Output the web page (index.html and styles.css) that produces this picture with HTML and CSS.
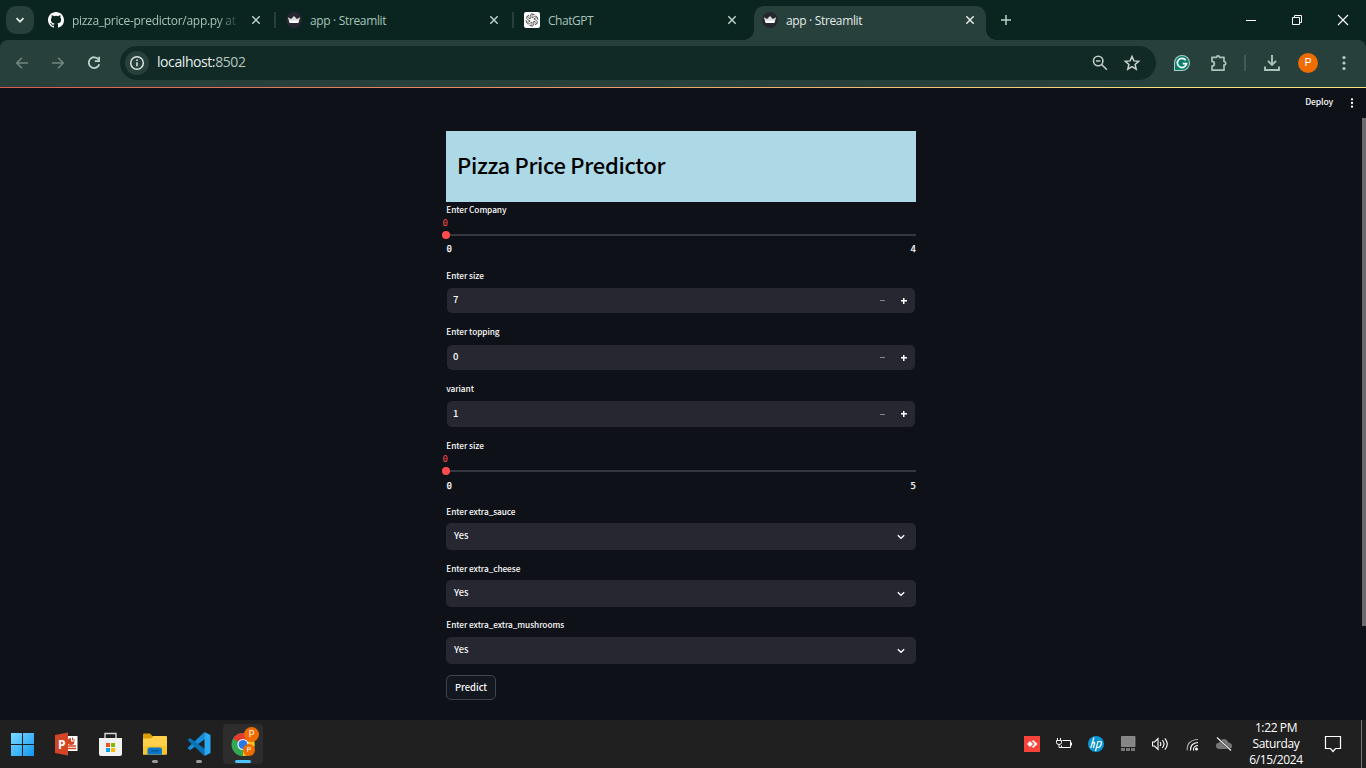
FILE: index.html
```html
<!DOCTYPE html>
<html lang="en">
<head>
<meta charset="utf-8">
<title>app · Streamlit</title>
<link rel="stylesheet" href="styles.css">
</head>
<body>
<svg class="defs" width="0" height="0">
  <defs>
    <symbol id="close" viewBox="0 0 16 16"><path d="M4.3 4.3l7.4 7.4M11.7 4.3l-7.4 7.4" stroke="currentColor" stroke-width="1.5" fill="none"/></symbol>
    <symbol id="crown" viewBox="0 0 16 16"><circle cx="8" cy="8" r="8" fill="#262730"/><path d="M1.8 5.2l3.3 1.9L8 4l2.9 3.1 3.3-1.9-1.6 5.1q-.2.7-1 .7H4.4q-.8 0-1-.7z" fill="#dcdcdc"/><path d="M3 8.8h10l-.5 1.5q-.2.7-1 .7h-7q-.8 0-1-.7z" fill="#fff"/></symbol>
    <symbol id="chev" viewBox="0 0 12 12"><path d="M2.800 4.200L6 7.300l3.200-3.100" stroke="#fafafa" stroke-width="1.400" fill="none"/></symbol>
  </defs>
</svg>

<header class="tabstrip">
  <button class="tab-search"><svg width="12" height="12" viewBox="0 0 12 12"><path d="M2.5 4.2L6 7.7l3.5-3.5" stroke="#dbe8e2" stroke-width="1.8" fill="none"/></svg></button>
  <div class="tab">
    <svg class="favicon" viewBox="0 0 16 16"><path fill="#fff" d="M8 0C3.58 0 0 3.58 0 8c0 3.54 2.29 6.53 5.47 7.59.4.07.55-.17.55-.38v-1.49c-2.01.37-2.53-.49-2.69-.94-.09-.23-.48-.94-.82-1.13-.28-.15-.68-.52-.01-.53.63-.01 1.08.58 1.23.82.72 1.21 1.87.87 2.33.66.07-.52.28-.87.51-1.07-1.78-.2-3.64-.89-3.64-3.95 0-.87.31-1.59.82-2.15-.08-.2-.36-1.02.08-2.12 0 0 .67-.21 2.2.82a7.5 7.5 0 014 0c1.53-1.04 2.2-.82 2.2-.82.44 1.1.16 1.92.08 2.12.51.56.82 1.27.82 2.15 0 3.07-1.87 3.75-3.65 3.95.29.25.54.73.54 1.48v2.2c0 .21.15.46.55.38A8 8 0 0016 8c0-4.42-3.58-8-8-8z"/></svg>
    <span class="tab-title fade">pizza_price-predictor/app.py at</span>
    <svg class="tab-close"><use href="#close"/></svg><i class="tab-sep"></i>
  </div>
  <div class="tab">
    <svg class="favicon"><use href="#crown"/></svg>
    <span class="tab-title">app · Streamlit</span>
    <svg class="tab-close"><use href="#close"/></svg><i class="tab-sep"></i>
  </div>
  <div class="tab">
    <svg class="favicon" viewBox="0 0 16 16"><rect width="16" height="16" rx="2" fill="#fff"/><g fill="none" stroke="#333" stroke-width=".7"><path id="petal" d="M8 5.900L10.600 4.400C12.600 3.300 14.200 5.400 13.400 7.100M8 5.900V3.800C8 2.300 9.800 1.900 10.700 2.900"/><use href="#petal" transform="rotate(60 8 8)"/><use href="#petal" transform="rotate(120 8 8)"/><use href="#petal" transform="rotate(180 8 8)"/><use href="#petal" transform="rotate(240 8 8)"/><use href="#petal" transform="rotate(300 8 8)"/></g></svg>
    <span class="tab-title chat">ChatGPT</span>
    <svg class="tab-close"><use href="#close"/></svg>
  </div>
  <div class="tab active">
    <svg class="favicon"><use href="#crown"/></svg>
    <span class="tab-title">app · Streamlit</span>
    <svg class="tab-close"><use href="#close"/></svg>
  </div>
  <svg class="new-tab" viewBox="0 0 16 16"><path d="M8 3v10M3 8h10" stroke="#b9d3c9" stroke-width="1.5"/></svg>
  <div class="window-buttons">
    <svg viewBox="0 0 46 40"><path d="M18 20.5h10" stroke="#fff"/></svg>
    <svg viewBox="0 0 46 40"><path d="M18.5 17.500h7v7h-7zM20.500 17.500v-2h7v7h-2" stroke="#fff" fill="none"/></svg>
    <svg viewBox="0 0 46 40"><path d="M18 15l10 10M28 15l-10 10" stroke="#fff" stroke-width="1.1"/></svg>
  </div>
</header>

<nav class="toolbar">
  <svg class="nav-icon" viewBox="0 0 16 16"><path d="M14 8H3M8 2.7L2.700 8 8 13.300" stroke="#70857f" stroke-width="1.6" fill="none"/></svg>
  <svg class="nav-icon" viewBox="0 0 16 16"><path d="M2 8h11M8 2.700L13.300 8 8 13.300" stroke="#70857f" stroke-width="1.600" fill="none"/></svg>
  <svg class="nav-icon" viewBox="0 0 16 16"><path d="M12.600 4.600A5.400 5.400 0 1013.300 9.300" stroke="#bdd5cc" stroke-width="1.800" fill="none"/><path d="M14 1.800V7H8.800V5.300h3.500V1.800z" fill="#bdd5cc"/></svg>
  <div class="omnibox">
    <span class="info"><svg width="16" height="16" viewBox="0 0 16 16"><circle cx="8" cy="8" r="6.300" stroke="#d9e3df" stroke-width="1.500" fill="none"/><path d="M8 7.200v4M8 4.500v1.600" stroke="#d9e3df" stroke-width="1.600"/></svg></span>
    <span class="url">localhost:<b>8502</b></span>
    <svg class="box-icon" viewBox="0 0 18 18"><circle cx="7.200" cy="7" r="4.700" stroke="#c2ccc8" stroke-width="1.600" fill="none"/><path d="M10.600 10.500l5.300 5.200M5 7h4.400" stroke="#c2ccc8" stroke-width="1.600"/></svg>
    <svg class="box-icon" viewBox="0 0 18 18"><path d="M9 2.500l1.900 4.400 4.800.4-3.600 3.200 1.100 4.700L9 12.700l-4.200 2.500 1.100-4.700-3.600-3.200 4.800-.4z" stroke="#c9d4d0" stroke-width="1.500" fill="none"/></svg>
  </div>
  <div class="extensions">
    <svg class="grammarly" viewBox="0 0 16 16"><path d="M0 16V8a8 8 0 118 8z" fill="#a9cfc3"/><path d="M1 15V8a7 7 0 117 7z" fill="#087d6b"/><path d="M11.700 5.200A4.600 4.600 0 1012.500 8.700H8.700" stroke="#fff" stroke-width="1.700" fill="none"/></svg>
    <svg class="puzzle" viewBox="0 0 18 18"><path d="M2 3.300h4.500a1.500 1.500 0 013 0H14v4.200a1.700 1.700 0 010 3.400v5.300H2v-4.100a2.300 2.300 0 000-4.700z" stroke="#a9c5bb" stroke-width="1.700" fill="none" stroke-linejoin="round"/></svg>
    <i class="bar-sep"></i>
    <svg class="download" viewBox="0 0 18 18"><path d="M9 1v9.500M4.900 6.900L9 11l4.100-4.100M2 12.500V16h14v-3.500" stroke="#a9c5bb" stroke-width="1.900" fill="none"/></svg>
    <span class="avatar">P</span>
    <svg class="kebab" viewBox="0 0 4 16"><g fill="#b5cdc4"><circle cx="2" cy="2.500" r="1.600"/><circle cx="2" cy="8" r="1.600"/><circle cx="2" cy="13.500" r="1.600"/></g></svg>
  </div>
</nav>

<main class="app">
  <div class="app-header"><span class="deploy">Deploy</span><svg width="4" height="10" viewBox="0 0 4 10"><g fill="#fafafa"><circle cx="2" cy="1.300" r="1.150"/><circle cx="2" cy="5" r="1.150"/><circle cx="2" cy="8.700" r="1.150"/></g></svg></div>
  <div class="scrollbar"></div>
  <form class="form">
    <h1 class="banner">Pizza Price Predictor</h1>
    <div class="field slider"><label>Enter Company</label><span class="value">0</span><div class="track"><i class="thumb"></i></div><div class="ticks"><span>0</span><span>4</span></div></div>
    <div class="field short"><label>Enter size</label><div class="number"><span>7</span><i class="minus"></i><i class="plus"></i></div></div>
    <div class="field"><label>Enter topping</label><div class="number"><span>0</span><i class="minus"></i><i class="plus"></i></div></div>
    <div class="field"><label>variant</label><div class="number tall"><span>1</span><i class="minus"></i><i class="plus"></i></div></div>
    <div class="field slider second"><label>Enter size</label><span class="value">0</span><div class="track"><i class="thumb"></i></div><div class="ticks"><span>0</span><span>5</span></div></div>
    <div class="field"><label>Enter extra_sauce</label><div class="select"><span>Yes</span><svg><use href="#chev"/></svg></div></div>
    <div class="field short tight"><label>Enter extra_cheese</label><div class="select"><span>Yes</span><svg><use href="#chev"/></svg></div></div>
    <div class="field tight"><label>Enter extra_extra_mushrooms</label><div class="select"><span>Yes</span><svg><use href="#chev"/></svg></div></div>
    <button type="button" class="predict">Predict</button>
  </form>
</main>

<footer class="taskbar">
  <div class="task"><svg viewBox="0 0 24 24"><defs><linearGradient id="win" x1="0" y1="0" x2="1" y2="1" gradientUnits="objectBoundingBox"><stop offset="0" stop-color="#7bdcff"/><stop offset="1" stop-color="#1296f3"/></linearGradient></defs><path d="M1 1H12v11H1zM13 1h11v11h-11zM1 13h11v11H1zM13 13h11v11h-11z" fill="url(#win)"/></svg></div>
  <div class="task"><svg viewBox="0 0 24 24"><path d="M12 4h11.500v15H12z" fill="#fff"/><path d="M14 16.500h8M14 14h8" stroke="#d24625" stroke-width="1.300"/><path d="M17 6a3.500 3.500 0 103.500 3.500H17z" fill="#d24625"/><path d="M18.500 5.500V8H21" stroke="#d24625" fill="none"/><path d="M1 3L14 .5v23L1 21z" fill="#d24625"/><text x="4" y="16.500" class="ppt">P</text></svg></div>
  <div class="task"><svg viewBox="0 0 24 24"><path d="M7 7V1.500h11V7" fill="none" stroke="#d8d8d8" stroke-width="1.400"/><path d="M1 6h23v16q0 2-2 2H3q-2 0-2-2z" fill="#f2f2f2"/><path d="M8 11h4v4H8z" fill="#f25022"/><path d="M13 11h4v4h-4z" fill="#7fba00"/><path d="M8 16h4v4H8z" fill="#00a4ef"/><path d="M13 16h4v4h-4z" fill="#ffb900"/></svg></div>
  <div class="task running"><svg viewBox="0 0 24 24"><path d="M1 2.500q0-1 1-1h6l2.500 2.700V8H1z" fill="#dc9d05"/><path d="M1 6.500h8l2-2.500h13q1 0 1 1v16.500q0 1-1 1H1z" fill="#ffd04a"/><path d="M1 14h24v7.500q0 1-1 1H1z" fill="#fbc52f"/><path d="M5.500 22.500v-5q0-2 2-2h10.500q2 0 2 2v5z" fill="#0877c9"/><path d="M9 18.800h7.500" stroke="#075593" stroke-width="1.300"/></svg></div>
  <div class="task running"><svg viewBox="0 0 24 24"><g transform="translate(1)"><path d="M17.500 0L18 7 3 18.200.5 16z" fill="#168dda"/><path d="M.5 8L3 6l15 11-.5 7z" fill="#0872b8"/><path d="M17.500 0L23.500 3v18l-6 3z" fill="#2aa9f2"/></g></svg></div>
  <div class="task current"><svg viewBox="0 0 24 24"><g transform="translate(1)"><circle cx="12" cy="12.500" r="11.500" fill="#31a852"/><path d="M12 12.500L2.100 6.700A11.500 11.500 0 0122 6.700z" fill="#e33b2e"/><path d="M12 12.500L22 6.700A11.500 11.500 0 0112 24z" fill="#fbc116"/><circle cx="12" cy="12.500" r="5.600" fill="#fff"/><circle cx="12" cy="12.500" r="4.500" fill="#2879e6"/></g></svg><b class="badge">P</b><b class="badge small">P</b></div>

  <div class="tray">
    <svg class="t1" viewBox="0 0 16 16"><path d="M0 0h16v16H0z" fill="#f9433a"/><path d="M3 8l3-3 3 3-3 3zM8 5.200l1.200-1.200L13.500 8l-4.300 4L8 10.800 10.800 8z" fill="#fff"/></svg>
    <svg class="t2" viewBox="0 0 16 16"><path d="M6.500 4.500h8v7H5.500V9.500M15.500 6.500v3M.5 4.500h5v2q0 2-2.500 2T.5 6.500zM1.500 2v2.500M4.500 2v2.500M3 8.500v3h2.500" fill="none" stroke="#fff"/></svg>
    <svg class="t3" viewBox="0 0 16 16"><circle cx="8" cy="8" r="8" fill="#0996d5"/><path d="M6 1.500L2.700 12M4 8q2.300-2.800 2.700-.8L5.300 12M12 5.500h-2L7.500 15M12 5.500q2 0 1.300 2.500T10.500 11.500H9" stroke="#fff" stroke-width="1.200" fill="none"/></svg>
    <svg class="t4" viewBox="0 0 16 16"><path d="M1.500.5h13.500v10H1.500z" fill="#858585" stroke="#a0a0a0" stroke-width=".7"/><path d="M1 12h4v3H1zM6 12h4v3H6zM11 12h4v3h-4z" fill="#777"/></svg>
    <svg class="t5" viewBox="0 0 18 16"><path d="M.5 6h2L6 2.500v11L2.500 10h-2zM8 6q1.600 2 0 4M10.300 4q3.400 4 0 8M12.800 2.300q5 5.700 0 11.400" fill="none" stroke="#fff" stroke-width="1.100"/></svg>
    <svg class="t6" viewBox="0 0 16 16"><circle cx="12.500" cy="13" r="1.500" fill="#fff"/><path d="M9.500 14.500Q9 10 14 9.500M6.500 14.500Q6 7 14 6.500" fill="none" stroke="#fff" stroke-width="1.100"/><path d="M3.200 14.500Q2.700 4 14 3.500" fill="none" stroke="#aaa" stroke-width="1.100"/></svg>
    <svg class="t7" viewBox="0 0 16 16"><path d="M3.500 13Q0 13 0 9.800 0 7 3 6.800 4.500 3 8 3q3 0 4.300 3.500Q16 7 16 10q0 3-3 3z" fill="#777"/><path d="M1 1.500l14 13" stroke="#222" stroke-width="2.200"/><path d="M1 1.500l14 13" stroke="#eee" stroke-width="1.200"/></svg>
  </div>
  <div class="clock"><span>1:22 PM</span><span>Saturday</span><span>6/15/2024</span></div>
  <svg class="notify" viewBox="0 0 18 18"><path d="M1.500 1.500h15v12h-5L9 16.500l-2.500-3h-5z" fill="none" stroke="#fff" stroke-width="1.200"/></svg>
  <i class="show-desktop"></i>
</footer>
</body>
</html>
```

FILE: styles.css
```css
* { box-sizing: border-box; }
body { margin: 0; width: 1366px; height: 768px; overflow: hidden; background: #0a2420; display: flex; flex-direction: column; font-family: "Open Sans", "Noto Sans", sans-serif; }
svg { display: block; flex: none; }
.defs { position: absolute; }
button { border: 0; padding: 0; margin: 0; font: inherit; }

/* Browser tabs */
.tabstrip { height: 40px; flex: none; display: flex; align-items: center; padding-left: 6px; background: #0a2420; }
.tab-search { width: 28px; height: 28px; border-radius: 10px; background: #28403b; display: grid; place-items: center; margin-right: 6px; }
.tab { position: relative; width: 238px; height: 40px; display: flex; align-items: center; padding-left: 8px; color: #a5c4b9; }
.favicon { width: 16px; height: 16px; margin-right: 8px; }
.tab-title { width: 168px; margin-right: 8px; font-size: 12px; line-height: 18px; white-space: nowrap; letter-spacing: -.34px; padding-top: 1px; }
.tab-title.chat { letter-spacing: -.45px; }
.tab-title.fade { width: 168px; letter-spacing: -.3px; -webkit-mask-image: linear-gradient(90deg, #000 145px, transparent 168px); mask-image: linear-gradient(90deg, #000 145px, transparent 168px); }
.tab-close { width: 16px; height: 16px; color: #bad2c9; }
.tab-sep { width: 2px; height: 16px; margin-left: 10px; background: #28403b; }
.tab.active { width: 232px; height: 34px; align-self: flex-end; background: #28403b; border-radius: 10px 10px 0 0; color: #e0ebe7; padding-bottom: 6px; }
.tab.active .tab-close { color: #e0ebe7; }
.tab.active::before, .tab.active::after { content: ""; position: absolute; bottom: 0; width: 10px; height: 10px; }
.tab.active::before { left: -10px; background: radial-gradient(circle at 0 0, transparent 9.500px, #28403b 10px); }
.tab.active::after { right: -10px; background: radial-gradient(circle at 100% 0, transparent 9.500px, #28403b 10px); }
.new-tab { width: 16px; height: 16px; margin-left: 12px; }
.window-buttons { margin-left: auto; display: flex; }
.window-buttons svg { width: 46px; height: 40px; }

/* Browser toolbar */
.toolbar { height: 48px; flex: none; display: flex; align-items: center; padding: 0 20px 1px 14px; background: #28403b; border-bottom: 1px solid; border-image: linear-gradient(90deg, #d95c4c, #f0a56d 50%, #fbe17c 85%) 1; clip-path: inset(0 round 8px 8px 0 0); }
.nav-icon { width: 16px; height: 16px; margin-right: 20px; }
.omnibox { width: 1036px; flex: none; height: 34px; margin-left: -2px; display: flex; align-items: center; background: #112a26; border-radius: 17px; padding: 0 15px 0 5px; }
.info { width: 24px; height: 24px; border-radius: 50%; background: #28403b; display: grid; place-items: center; }
.url { margin: 0 auto 0 8px; padding-bottom: 2px; color: #e6eeeb; font-size: 14px; line-height: 20px; letter-spacing: -.42px; }
.url b { font-weight: 400; color: #b4c5bf; }
.box-icon { width: 18px; height: 18px; margin-left: 14px; }
.extensions { flex: none; display: flex; align-items: center; padding-left: 18px; }
.grammarly { width: 16px; height: 16px; }
.puzzle { width: 18px; height: 18px; margin-left: 20px; }
.bar-sep { width: 2px; height: 16px; margin: 0 17px 0 16px; background: #425a53; }
.download { width: 18px; height: 18px; }
.avatar { width: 20px; height: 20px; margin: 0 24px 0 17px; border-radius: 50%; background: #ef6c00; color: #fff; font: 11px/20px Roboto, sans-serif; text-align: center; }
.kebab { width: 4px; height: 16px; }

/* Streamlit page */
.app { position: relative; height: 632px; flex: none; background: #0e1117; color: #fafafa; font-family: "Noto Sans CJK JP", "Noto Sans", sans-serif; }
.app-header { height: 28px; display: flex; justify-content: flex-end; align-items: center; padding-right: 12px; }
.deploy { font-size: 8.600px; font-weight: 500; line-height: 12px; margin-right: 17px; padding-bottom: 2px; letter-spacing: -.15px; }
.app-header svg { margin-top: 1px; }
.scrollbar { position: absolute; right: 0; top: 30px; width: 4px; height: 508px; background: #6b6b6d; }
.form { width: 470px; margin: 15px 0 0 446px; }
.banner { height: 71px; margin: 0; padding: 0 11px; background: #add8e6; color: #000; font-size: 22px; font-weight: 500; line-height: 67px; letter-spacing: -.31px; white-space: nowrap; }
.field { height: 57px; display: flex; flex-direction: column; justify-content: space-between; padding-bottom: 11px; }
.field.short { height: 56px; }
.field.tight { padding-bottom: 10px; }
label { font-size: 8.300px; font-weight: 500; line-height: 14px; height: 16px; letter-spacing: -.08px; padding-left: .3px; white-space: nowrap; }
.number { height: 25px; margin: 0 1px; background: #262730; border-radius: 5px; display: flex; align-items: center; padding: 0 8px 0 6px; font-size: 9.500px; line-height: 22px; }
.number.tall { height: 26px; }
.number span { margin-right: auto; padding-bottom: 3px; font-weight: 500; }
.minus { width: 5px; height: 1px; background: #84858a; margin-right: 16px; }
.plus { width: 6px; height: 6px; background: linear-gradient(#fff, #fff) center / 6px 1.500px no-repeat, linear-gradient(#fff, #fff) center / 1.500px 6px no-repeat; }
.select { height: 27px; background: #262730; border-radius: 5px; display: flex; align-items: center; justify-content: space-between; padding: 0 9px 0 8px; font-size: 9.300px; font-weight: 500; line-height: 25px; }
.select span { padding-bottom: 2px; }
.select svg { width: 12px; height: 12px; }
.field.slider { height: 66px; padding: 0; justify-content: flex-start; font-family: "DejaVu Sans Mono", monospace; }
.slider label { font-family: "Noto Sans CJK JP", sans-serif; }
.value { color: #ff4b4b; font-size: 9px; line-height: 10px; height: 16px; margin-left: -3.500px; }
.track { height: 2px; background: #34373f; display: flex; align-items: center; }
.thumb { width: 8px; height: 8px; margin-left: -4px; border-radius: 50%; background: #ff4b4b; }
.ticks { display: flex; justify-content: space-between; font-size: 9px; line-height: 12px; padding: 7px 0 0 .5px; -webkit-text-stroke: .25px #fafafa; }
.second .ticks { padding-top: 8px; }
.predict { display: block; width: 50px; height: 25px; margin-top: 1px; border: 1px solid #41444c; border-radius: 5px; background: #131720; color: #fafafa; font-size: 9.400px; font-weight: 500; line-height: 20px; padding-bottom: 2px; }

/* Windows taskbar */
.taskbar { height: 48px; flex: none; display: flex; align-items: center; background: #202020; padding-left: 3px; }
.task { position: relative; width: 40px; height: 40px; margin-right: 4px; display: grid; place-items: center; border-radius: 4px; }
.task > svg { width: 24px; height: 24px; margin-left: -2px; overflow: visible; }
.ppt { font: bold 12px "Open Sans", sans-serif; fill: #fff; }
.running::after, .current::after { content: ""; position: absolute; bottom: 1px; left: 17px; width: 6px; height: 3px; border-radius: 2px; background: #9b9b9b; }
.current { background: #2d2d2d; }
.current::after { left: 12px; width: 16px; background: #4cc2ff; }
.badge { position: absolute; left: 21px; top: 3px; width: 15px; height: 15px; border-radius: 50%; background: #ef6c00; color: #fff; font: 9px/15px Roboto, sans-serif; text-align: center; }
.badge.small { left: 20px; top: 20px; width: 12px; height: 12px; font-size: 7px; line-height: 12px; }
.tray { margin-left: auto; display: flex; align-items: center; gap: 16px; }
.tray svg { width: 16px; height: 16px; }
.tray .t5 { width: 18px; margin-right: -2px; }
.clock { width: 70px; margin-left: 9px; display: flex; flex-direction: column; align-items: center; color: #fff; font-size: 12px; line-height: 16px; letter-spacing: -.38px; white-space: nowrap; }
.notify { width: 18px; height: 18px; margin: 0 19px 0 13px; }
.show-desktop { width: 5px; height: 48px; border-left: 1px solid #777; }
```
